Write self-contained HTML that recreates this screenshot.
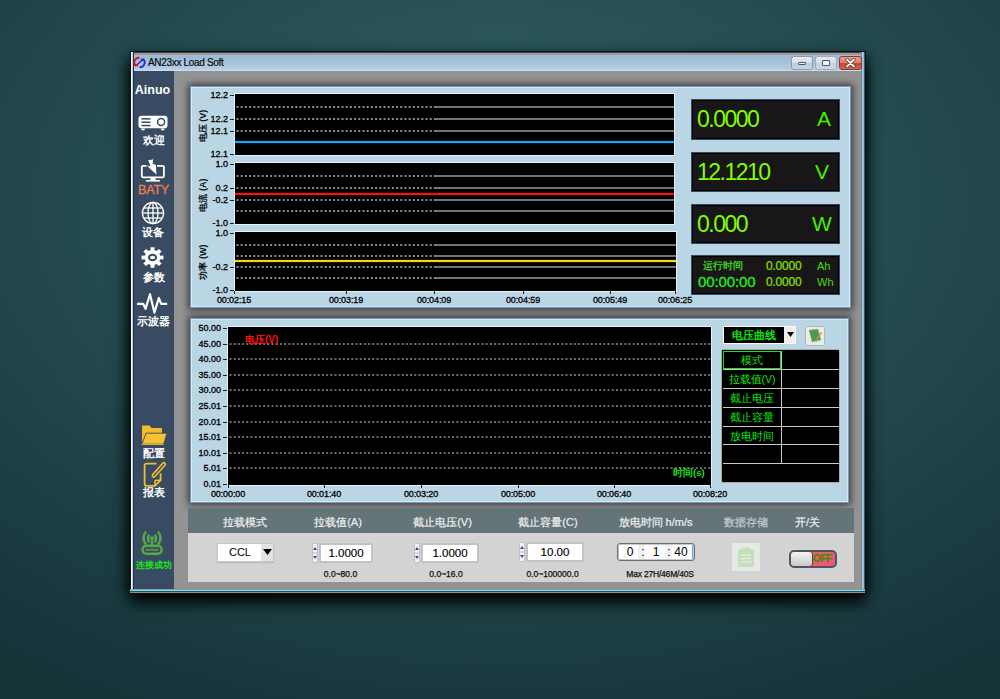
<!DOCTYPE html>
<html><head><meta charset="utf-8">
<style>
*{margin:0;padding:0;box-sizing:border-box}
html,body{width:1000px;height:699px;overflow:hidden}
body{position:relative;font-family:"Liberation Sans",sans-serif;
background:radial-gradient(ellipse 850px 580px at 500px 200px,#326267 0%,#153237 100%);}
.a{position:absolute}
#shadow{left:130px;top:56px;width:735px;height:537px;box-shadow:0 10px 14px 0 rgba(0,0,0,.85),-3px 0 14px 0 rgba(0,0,0,.55),3px 0 10px 0 rgba(0,0,0,.5)}
#frame{left:130px;top:51px;width:736px;height:543px;background:#061416}
#title{left:131px;top:52px;width:734px;height:19px;background:linear-gradient(#3a4446 0,#3a4446 1px,#a09896 1px,#a09896 2.5px,#a0bce0 3px,#9cb8d4 5px,#a8c4dc 11px,#b4cce4 17px,#c0dcf4 18px,#c0dcf4 19px)}
#lb{left:131px;top:52px;width:3px;height:541px;background:linear-gradient(90deg,#f4f8fc 0,#f4f8fc 1px,#c4d4e8 1px,#c4d4e8 2px,#1a2e48 2px)}
#rb{left:861px;top:52px;width:4px;height:541px;background:linear-gradient(90deg,#8a8080 0,#8a8080 1px,#c0c0d8 1px,#c0c0d8 2px,#70c8e8 2px,#70c8e8 3px,#2a6070 3px)}
#bb{left:130px;top:589px;width:735px;height:4px;background:linear-gradient(#a09090 0,#a09090 1px,#80e0f8 1px,#80e0f8 2px,#0a5a6a 2px,#0a5a6a 3px,#a08888 3px)}
#client{left:134px;top:71px;width:727px;height:518px;background:#939393}
#side{left:134px;top:71px;width:40px;height:518px;background:#384b62}
.panel{background:#bad5e3;border:1px solid #7898c0;box-shadow:inset 0 0 0 1px #d0eaf6,0 0 7px 2px rgba(0,0,0,.6)}
.plot{background:#000;border-top:1px solid #e8f4fa}
.lbl{font-size:9px;color:#000;text-align:right;width:40px;line-height:10px;letter-spacing:0px;-webkit-text-stroke:0.3px #000}
.tl{font-size:9px;color:#000;line-height:10px;width:60px;text-align:center;letter-spacing:-0.1px;-webkit-text-stroke:0.3px #000}
.grid{height:1px;background:repeating-linear-gradient(90deg,#9a9a9a 0 2px,transparent 2px 5px)}
.box{background:#181616;border:1px solid #2f4d68;box-shadow:inset 0 0 0 1px #000}
.big{font-size:22px;color:#7fff00;line-height:22px}
.side-t{left:133px;width:41px;text-align:center;font-size:10.5px;font-weight:bold;color:#fff;line-height:12px}
.hdr{font-size:11px;color:#f0f0f0;line-height:12px;text-align:center}
</style></head><body>
<div id="shadow" class="a"></div>
<div id="frame" class="a"></div>
<div id="title" class="a"></div>
<div id="client" class="a"></div>
<div id="lb" class="a"></div>
<div id="rb" class="a"></div>
<div id="bb" class="a"></div>
<div id="side" class="a"></div>


<!-- title bar -->
<svg class="a" style="left:133px;top:56px" width="13" height="13" viewBox="0 0 13 13">
<path d="M6.5 1.8 A4.7 4.7 0 0 0 3.2 10.2" fill="none" stroke="#e01010" stroke-width="1.8"/>
<path d="M6.5 11.2 A4.7 4.7 0 0 0 9.8 2.8" fill="none" stroke="#1530d0" stroke-width="1.8"/>
<path d="M2 8.5 L4.8 11 L5.2 7.6Z" fill="#e01010"/>
<path d="M11 4.5 L8.2 2 L7.8 5.4Z" fill="#1530d0"/>
<path d="M4.5 8.5 L8.5 4.5" stroke="#1530d0" stroke-width="1.4"/>
</svg>
<div class="a" id="ttext" style="left:148px;top:57px;font-size:10px;line-height:12px;color:#0a0a0a;letter-spacing:-0.32px;-webkit-text-stroke:0.2px #0a0a0a">AN23xx Load Soft</div>
<!-- window buttons -->
<div class="a" style="left:791px;top:56px;width:22px;height:14px;border:1px solid #8b9cae;border-radius:3px;background:linear-gradient(#e6eef7 0%,#d4e0ec 45%,#bccbdc 55%,#c8d6e6 100%)"></div>
<div class="a" style="left:798px;top:62px;width:8px;height:3px;background:#f4f4f4;border:1px solid #4c5868;border-radius:1px"></div>
<div class="a" style="left:815px;top:56px;width:22px;height:14px;border:1px solid #9eadbe;border-radius:3px;background:linear-gradient(#e2eaf4 0%,#d4e0ec 45%,#c2d0e0 55%,#ccd9e8 100%)"></div>
<div class="a" style="left:822px;top:60px;width:8px;height:6px;background:#f4f4f4;border:1px solid #4c5868;border-radius:1px"></div>
<div class="a" style="left:839px;top:56px;width:23px;height:14px;border:1px solid #8a3b30;border-radius:3px;background:linear-gradient(#eaa294 0%,#e07f6c 45%,#c8462f 55%,#d26650 100%)"></div>
<svg class="a" style="left:845px;top:58px" width="11" height="10" viewBox="0 0 11 10"><path d="M2 1.5 L9 8.5 M9 1.5 L2 8.5" stroke="#4a2a28" stroke-width="3.2" stroke-linecap="round"/><path d="M2 1.5 L9 8.5 M9 1.5 L2 8.5" stroke="#fff" stroke-width="1.8" stroke-linecap="round"/></svg>

<!-- sidebar -->
<div class="a" style="left:132px;top:83px;width:41px;text-align:center;font-size:12.5px;font-weight:bold;color:#fff;line-height:14px">Ainuo</div>
<svg class="a" style="left:137px;top:114px" width="32" height="20" viewBox="0 0 32 20">
<rect x="1.5" y="1.8" width="29" height="12.4" rx="3" fill="#fff"/>
<rect x="4.5" y="4.1" width="9" height="1.5" fill="#384b62"/><rect x="4.5" y="7.5" width="9" height="1.5" fill="#384b62"/><rect x="4.5" y="10.8" width="9" height="1.5" fill="#384b62"/>
<circle cx="24.1" cy="7.9" r="3.5" fill="none" stroke="#384b62" stroke-width="1.5"/>
<path d="M4 14.5 h4 a2 2 0 0 1 -4 0z M23.7 14.5 h4 a2 2 0 0 1 -4 0z" fill="#fff"/>
</svg>
<div class="a side-t" style="top:134px">欢迎</div>
<svg class="a" style="left:140px;top:158px" width="26" height="25" viewBox="0 0 26 25">
<rect x="1.8" y="7.9" width="22.1" height="11.4" rx="1.2" fill="none" stroke="#fff" stroke-width="1.8"/>
<rect x="10.5" y="20" width="5" height="2.5" fill="#fff"/><rect x="6" y="22" width="13.8" height="1.6" fill="#fff"/>
<path d="M7.5 2 L14 0.6 L13 5.5 L16.5 6.5 L17 17.5 L6.5 8 L10 7.5Z" fill="#fff" stroke="#384b62" stroke-width="1" stroke-linejoin="round"/>
</svg>
<div class="a" style="left:133px;top:183px;width:41px;text-align:center;font-size:12.5px;letter-spacing:-0.2px;-webkit-text-stroke:0.3px #f47c52;color:#f47c52;line-height:14px">BATY</div>
<svg class="a" style="left:141px;top:201px" width="24" height="24" viewBox="0 0 24 24">
<g fill="none" stroke="#fff" stroke-width="1.3">
<circle cx="12" cy="12" r="10.6"/><ellipse cx="12" cy="12" rx="5" ry="10.6"/><line x1="12" y1="1.4" x2="12" y2="22.6"/>
<line x1="1.4" y1="12" x2="22.6" y2="12"/><line x1="3" y1="7" x2="21" y2="7"/><line x1="3" y1="17" x2="21" y2="17"/>
</g></svg>
<div class="a side-t" style="top:226px;left:132px">设备</div>
<svg class="a" style="left:141px;top:247px" width="23" height="22" viewBox="0 0 23 22">
<path fill="#fff" d="M8.45 3.62 L9.57 3.27 L9.47 0.29 L13.53 0.29 L13.43 3.27 L14.55 3.62 L15.61 4.12 L17.80 1.94 L20.67 4.62 L18.34 6.66 L18.87 7.65 L19.24 8.70 L22.44 8.61 L22.44 12.39 L19.24 12.30 L18.87 13.35 L18.34 14.34 L20.67 16.38 L17.80 19.06 L15.61 16.88 L14.55 17.38 L13.43 17.73 L13.53 20.71 L9.47 20.71 L9.57 17.73 L8.45 17.38 L7.39 16.88 L5.20 19.06 L2.33 16.38 L4.66 14.34 L4.13 13.35 L3.76 12.30 L0.56 12.39 L0.56 8.61 L3.76 8.70 L4.13 7.65 L4.66 6.66 L2.33 4.62 L5.20 1.94 L7.39 4.12Z"/><ellipse cx="11.5" cy="10.5" rx="3.6" ry="2.8" fill="#fff" stroke="#384b62" stroke-width="2"/>
</svg>
<div class="a side-t" style="top:271px">参数</div>
<svg class="a" style="left:136px;top:292px" width="33" height="23" viewBox="0 0 33 23">
<path d="M1 11.8 L7.2 11.8 L9.6 16.8 L14 2.2 L18.4 20.6 L22.8 6 L25.2 11.8 L31.2 11.8" fill="none" stroke="#fff" stroke-width="2.2" stroke-linejoin="round" stroke-linecap="butt"/>
</svg>
<div class="a side-t" style="top:315px;font-size:11px">示波器</div>
<svg class="a" style="left:141px;top:424px" width="27" height="22" viewBox="0 0 27 22">
<path d="M1 1.5 L8.5 1.5 L10.5 4 L21 4 L21 12 L1 20 Z" fill="#f2bd2c"/>
<path d="M5 9.2 L26 9.2 L22.6 20.2 L1 20.2 Z" fill="#f7c233" stroke="#384b62" stroke-width="0.9" stroke-linejoin="round"/>
<path d="M1 19.5 L1 20.4 L22.6 20.4" fill="none" stroke="#f7c233" stroke-width="0.9"/>
</svg>
<div class="a side-t" style="top:447px">配置</div>
<svg class="a" style="left:143px;top:460px" width="25" height="28" viewBox="0 0 25 28">
<path d="M13.5 3.6 L3.6 3.6 Q1.6 3.6 1.6 5.6 L1.6 23.8 Q1.6 25.8 3.6 25.8 L12 25.8 L17.6 20.2 L17.6 13.5" fill="none" stroke="#f2bd2c" stroke-width="1.8"/>
<path d="M12 25.8 L12 21.6 Q12 20.2 13.4 20.2 L17.6 20.2" fill="none" stroke="#f2bd2c" stroke-width="1.6"/>
<line x1="10.8" y1="15.6" x2="20.8" y2="4.2" stroke="#f2bd2c" stroke-width="4.6" stroke-linecap="round"/>
<line x1="10.8" y1="15.6" x2="20.8" y2="4.2" stroke="#384b62" stroke-width="1.3" stroke-linecap="round"/>
</svg>
<div class="a side-t" style="top:486px">报表</div>
<svg class="a" style="left:140px;top:530px" width="25" height="26" viewBox="0 0 25 26">
<g fill="none" stroke="#58a84a" stroke-width="2.4">
<path d="M6 1.5 Q1 8 6 14.5"/><path d="M18 1.5 Q23 8 18 14.5"/>
<path d="M9.2 4.8 Q6.6 8.5 9.2 12.2"/><path d="M14.8 4.8 Q17.4 8.5 14.8 12.2"/>
<line x1="12" y1="8" x2="12" y2="16"/>
<rect x="2.6" y="15.8" width="19" height="8" rx="3.6"/>
</g><rect x="5.5" y="18.6" width="13" height="2.4" fill="#4a8c40"/><circle cx="12" cy="8.2" r="2" fill="#58a84a"/></svg>
<div class="a side-t" style="top:559px;left:134px;width:39px;font-size:9px;color:#1ee01e">连接成功</div>

<!-- upper panel -->
<div class="a panel" style="left:190px;top:86px;width:661px;height:222px"></div>
<div class="a plot" style="left:234px;top:94px;width:440px;height:61px"></div>
<div class="a plot" style="left:234px;top:163px;width:440px;height:61px"></div>
<div class="a plot" style="left:234px;top:232px;width:442px;height:59px"></div>

<!-- readouts -->
<div class="a box" style="left:691px;top:99px;width:149px;height:41px"></div>
<div class="a box" style="left:691px;top:152px;width:149px;height:40px"></div>
<div class="a box" style="left:691px;top:204px;width:149px;height:40px"></div>
<div class="a box" style="left:691px;top:255px;width:149px;height:40px"></div>
<div class="a" style="left:234px;top:93px;width:441px;height:63px;background:#e4f3f9"></div>
<div class="a" style="left:235px;top:94px;width:439px;height:61px;background:#000"></div>
<svg class="a" style="left:236px;top:106px" width="199" height="2"><line x1="0.5" y1="1.0" x2="199" y2="1.0" stroke="#8c8c8c" stroke-width="2" stroke-dasharray="2 2.2"/></svg>
<div class="a" style="left:435px;top:106px;width:239px;height:2px;background:#747474"></div>
<svg class="a" style="left:236px;top:118px" width="199" height="2"><line x1="0.5" y1="1.0" x2="199" y2="1.0" stroke="#8c8c8c" stroke-width="2" stroke-dasharray="2 2.2"/></svg>
<div class="a" style="left:435px;top:118px;width:239px;height:2px;background:#747474"></div>
<svg class="a" style="left:236px;top:130px" width="199" height="2"><line x1="0.5" y1="1.0" x2="199" y2="1.0" stroke="#8c8c8c" stroke-width="2" stroke-dasharray="2 2.2"/></svg>
<div class="a" style="left:435px;top:130px;width:239px;height:2px;background:#747474"></div>
<div class="a" style="left:235px;top:141px;width:439px;height:2px;background:#19a4f4;box-shadow:0 0 1px #19a4f4"></div>
<div class="a lbl" style="left:184px;top:90px;width:44px;font-size:9px">12.2</div>
<div class="a" style="left:230px;top:95px;width:4px;height:1px;background:#202020"></div>
<div class="a lbl" style="left:184px;top:114px;width:44px;font-size:9px">12.2</div>
<div class="a" style="left:230px;top:119px;width:4px;height:1px;background:#202020"></div>
<div class="a lbl" style="left:184px;top:126px;width:44px;font-size:9px">12.1</div>
<div class="a" style="left:230px;top:131px;width:4px;height:1px;background:#202020"></div>
<div class="a lbl" style="left:184px;top:149px;width:44px;font-size:9px">12.1</div>
<div class="a" style="left:230px;top:154px;width:4px;height:1px;background:#202020"></div>
<div class="a" style="left:163px;top:120px;width:80px;height:12px;line-height:12px;font-size:9px;text-align:center;color:#111;font-weight:bold;transform:rotate(-90deg)">电压 (V)</div>
<div class="a" style="left:234px;top:162px;width:441px;height:63px;background:#e4f3f9"></div>
<div class="a" style="left:235px;top:163px;width:439px;height:61px;background:#000"></div>
<svg class="a" style="left:236px;top:175px" width="199" height="2"><line x1="0.5" y1="1.0" x2="199" y2="1.0" stroke="#8c8c8c" stroke-width="2" stroke-dasharray="2 2.2"/></svg>
<div class="a" style="left:435px;top:175px;width:239px;height:2px;background:#747474"></div>
<svg class="a" style="left:236px;top:187px" width="199" height="2"><line x1="0.5" y1="1.0" x2="199" y2="1.0" stroke="#8c8c8c" stroke-width="2" stroke-dasharray="2 2.2"/></svg>
<div class="a" style="left:435px;top:187px;width:239px;height:2px;background:#747474"></div>
<svg class="a" style="left:236px;top:199px" width="199" height="2"><line x1="0.5" y1="1.0" x2="199" y2="1.0" stroke="#8c8c8c" stroke-width="2" stroke-dasharray="2 2.2"/></svg>
<div class="a" style="left:435px;top:199px;width:239px;height:2px;background:#747474"></div>
<svg class="a" style="left:236px;top:210px" width="199" height="2"><line x1="0.5" y1="1.0" x2="199" y2="1.0" stroke="#8c8c8c" stroke-width="2" stroke-dasharray="2 2.2"/></svg>
<div class="a" style="left:435px;top:210px;width:239px;height:2px;background:#747474"></div>
<div class="a" style="left:235px;top:193px;width:439px;height:2px;background:#ff1010;box-shadow:0 0 1px #ff1010"></div>
<div class="a lbl" style="left:184px;top:159px;width:44px;font-size:9px">1.0</div>
<div class="a" style="left:230px;top:164px;width:4px;height:1px;background:#202020"></div>
<div class="a lbl" style="left:184px;top:183px;width:44px;font-size:9px">0.2</div>
<div class="a" style="left:230px;top:188px;width:4px;height:1px;background:#202020"></div>
<div class="a lbl" style="left:184px;top:195px;width:44px;font-size:9px">-0.2</div>
<div class="a" style="left:230px;top:200px;width:4px;height:1px;background:#202020"></div>
<div class="a lbl" style="left:184px;top:218px;width:44px;font-size:9px">-1.0</div>
<div class="a" style="left:230px;top:223px;width:4px;height:1px;background:#202020"></div>
<div class="a" style="left:163px;top:189px;width:80px;height:12px;line-height:12px;font-size:9px;text-align:center;color:#111;font-weight:bold;transform:rotate(-90deg)">电流 (A)</div>
<div class="a" style="left:234px;top:231px;width:443px;height:61px;background:#e4f3f9"></div>
<div class="a" style="left:235px;top:232px;width:441px;height:59px;background:#000"></div>
<svg class="a" style="left:236px;top:244px" width="199" height="2"><line x1="0.5" y1="1.0" x2="199" y2="1.0" stroke="#8c8c8c" stroke-width="2" stroke-dasharray="2 2.2"/></svg>
<div class="a" style="left:435px;top:244px;width:241px;height:2px;background:#747474"></div>
<svg class="a" style="left:236px;top:255px" width="199" height="2"><line x1="0.5" y1="1.0" x2="199" y2="1.0" stroke="#8c8c8c" stroke-width="2" stroke-dasharray="2 2.2"/></svg>
<div class="a" style="left:435px;top:255px;width:241px;height:2px;background:#747474"></div>
<svg class="a" style="left:236px;top:266px" width="199" height="2"><line x1="0.5" y1="1.0" x2="199" y2="1.0" stroke="#8c8c8c" stroke-width="2" stroke-dasharray="2 2.2"/></svg>
<div class="a" style="left:435px;top:266px;width:241px;height:2px;background:#747474"></div>
<svg class="a" style="left:236px;top:277px" width="199" height="2"><line x1="0.5" y1="1.0" x2="199" y2="1.0" stroke="#8c8c8c" stroke-width="2" stroke-dasharray="2 2.2"/></svg>
<div class="a" style="left:435px;top:277px;width:241px;height:2px;background:#747474"></div>
<div class="a" style="left:235px;top:260px;width:441px;height:2px;background:#ffd400;box-shadow:0 0 1px #ffd400"></div>
<div class="a lbl" style="left:184px;top:228px;width:44px;font-size:9px">1.0</div>
<div class="a" style="left:230px;top:233px;width:4px;height:1px;background:#202020"></div>
<div class="a lbl" style="left:184px;top:262px;width:44px;font-size:9px">-0.2</div>
<div class="a" style="left:230px;top:267px;width:4px;height:1px;background:#202020"></div>
<div class="a lbl" style="left:184px;top:285px;width:44px;font-size:9px">-1.0</div>
<div class="a" style="left:230px;top:290px;width:4px;height:1px;background:#202020"></div>
<div class="a" style="left:163px;top:256px;width:80px;height:12px;line-height:12px;font-size:9px;text-align:center;color:#111;font-weight:bold;transform:rotate(-90deg)">功率 (W)</div>
<div class="a" style="left:234px;top:291px;width:1px;height:3px;background:#202020"></div>
<div class="a tl" style="left:204.0px;top:295px;width:60px;font-size:9px">00:02:15</div>
<div class="a" style="left:346px;top:291px;width:1px;height:3px;background:#202020"></div>
<div class="a tl" style="left:316.0px;top:295px;width:60px;font-size:9px">00:03:19</div>
<div class="a" style="left:434px;top:291px;width:1px;height:3px;background:#202020"></div>
<div class="a tl" style="left:404.0px;top:295px;width:60px;font-size:9px">00:04:09</div>
<div class="a" style="left:523px;top:291px;width:1px;height:3px;background:#202020"></div>
<div class="a tl" style="left:493.0px;top:295px;width:60px;font-size:9px">00:04:59</div>
<div class="a" style="left:610px;top:291px;width:1px;height:3px;background:#202020"></div>
<div class="a tl" style="left:580.0px;top:295px;width:60px;font-size:9px">00:05:49</div>
<div class="a" style="left:675px;top:291px;width:1px;height:3px;background:#202020"></div>
<div class="a tl" style="left:645.0px;top:295px;width:60px;font-size:9px">00:06:25</div>
<div class="a" style="left:697px;top:108px;white-space:nowrap;font-size:23px;line-height:23px;color:#80ff00;letter-spacing:-1.5px">0.0000</div>
<div class="a" style="left:817px;top:107px;white-space:nowrap;font-size:21px;line-height:23px;color:#44f000">A</div>
<div class="a" style="left:697px;top:161px;white-space:nowrap;font-size:23px;line-height:23px;color:#80ff00;letter-spacing:-1.5px">12.1210</div>
<div class="a" style="left:815px;top:160px;white-space:nowrap;font-size:21px;line-height:23px;color:#44f000">V</div>
<div class="a" style="left:697px;top:213px;white-space:nowrap;font-size:23px;line-height:23px;color:#80ff00;letter-spacing:-1.5px">0.000</div>
<div class="a" style="left:812px;top:212px;white-space:nowrap;font-size:21px;line-height:23px;color:#44f000">W</div>
<div class="a" style="left:703px;top:260px;white-space:nowrap;font-size:10px;line-height:12px;color:#44dd22;-webkit-text-stroke:0.3px #44dd22">运行时间</div>
<div class="a" style="left:698px;top:274px;white-space:nowrap;font-size:15px;line-height:16px;color:#22ee22;letter-spacing:-0.1px;-webkit-text-stroke:0.3px #22ee22">00:00:00</div>
<div class="a" style="left:766px;top:260px;white-space:nowrap;font-size:12px;line-height:12px;color:#88e000;letter-spacing:-0.2px;-webkit-text-stroke:0.2px #88e000">0.0000</div>
<div class="a" style="left:766px;top:276px;white-space:nowrap;font-size:12px;line-height:12px;color:#88e000;letter-spacing:-0.2px;-webkit-text-stroke:0.2px #88e000">0.0000</div>
<div class="a" style="left:817px;top:260px;white-space:nowrap;font-size:11px;line-height:12px;color:#44dd00">Ah</div>
<div class="a" style="left:817px;top:276px;white-space:nowrap;font-size:11px;line-height:12px;color:#44dd00">Wh</div>

<!-- lower panel -->
<div class="a panel" style="left:190px;top:318px;width:659px;height:185px"></div>
<div class="a plot" style="left:227px;top:326px;width:484px;height:159px"></div>

<div class="a" style="left:227px;top:326px;width:485px;height:160px;background:#e4f3f9"></div>
<div class="a" style="left:228px;top:327px;width:483px;height:158px;background:#000"></div>
<div class="a lbl" style="left:177px;top:323px;width:44px;font-size:9px">50.00</div>
<div class="a" style="left:223px;top:328px;width:4px;height:1px;background:#202020"></div>
<svg class="a" style="left:229px;top:343px" width="482" height="2"><line x1="0.5" y1="1.0" x2="482" y2="1.0" stroke="#6c6c6c" stroke-width="2" stroke-dasharray="2 2.2"/></svg>
<div class="a lbl" style="left:177px;top:339px;width:44px;font-size:9px">45.00</div>
<div class="a" style="left:223px;top:344px;width:4px;height:1px;background:#202020"></div>
<svg class="a" style="left:229px;top:358px" width="482" height="2"><line x1="0.5" y1="1.0" x2="482" y2="1.0" stroke="#6c6c6c" stroke-width="2" stroke-dasharray="2 2.2"/></svg>
<div class="a lbl" style="left:177px;top:354px;width:44px;font-size:9px">40.00</div>
<div class="a" style="left:223px;top:359px;width:4px;height:1px;background:#202020"></div>
<svg class="a" style="left:229px;top:374px" width="482" height="2"><line x1="0.5" y1="1.0" x2="482" y2="1.0" stroke="#6c6c6c" stroke-width="2" stroke-dasharray="2 2.2"/></svg>
<div class="a lbl" style="left:177px;top:370px;width:44px;font-size:9px">35.00</div>
<div class="a" style="left:223px;top:375px;width:4px;height:1px;background:#202020"></div>
<svg class="a" style="left:229px;top:389px" width="482" height="2"><line x1="0.5" y1="1.0" x2="482" y2="1.0" stroke="#6c6c6c" stroke-width="2" stroke-dasharray="2 2.2"/></svg>
<div class="a lbl" style="left:177px;top:385px;width:44px;font-size:9px">30.00</div>
<div class="a" style="left:223px;top:390px;width:4px;height:1px;background:#202020"></div>
<svg class="a" style="left:229px;top:405px" width="482" height="2"><line x1="0.5" y1="1.0" x2="482" y2="1.0" stroke="#6c6c6c" stroke-width="2" stroke-dasharray="2 2.2"/></svg>
<div class="a lbl" style="left:177px;top:401px;width:44px;font-size:9px">25.01</div>
<div class="a" style="left:223px;top:406px;width:4px;height:1px;background:#202020"></div>
<svg class="a" style="left:229px;top:421px" width="482" height="2"><line x1="0.5" y1="1.0" x2="482" y2="1.0" stroke="#6c6c6c" stroke-width="2" stroke-dasharray="2 2.2"/></svg>
<div class="a lbl" style="left:177px;top:417px;width:44px;font-size:9px">20.01</div>
<div class="a" style="left:223px;top:422px;width:4px;height:1px;background:#202020"></div>
<svg class="a" style="left:229px;top:436px" width="482" height="2"><line x1="0.5" y1="1.0" x2="482" y2="1.0" stroke="#6c6c6c" stroke-width="2" stroke-dasharray="2 2.2"/></svg>
<div class="a lbl" style="left:177px;top:432px;width:44px;font-size:9px">15.01</div>
<div class="a" style="left:223px;top:437px;width:4px;height:1px;background:#202020"></div>
<svg class="a" style="left:229px;top:452px" width="482" height="2"><line x1="0.5" y1="1.0" x2="482" y2="1.0" stroke="#6c6c6c" stroke-width="2" stroke-dasharray="2 2.2"/></svg>
<div class="a lbl" style="left:177px;top:448px;width:44px;font-size:9px">10.01</div>
<div class="a" style="left:223px;top:453px;width:4px;height:1px;background:#202020"></div>
<svg class="a" style="left:229px;top:467px" width="482" height="2"><line x1="0.5" y1="1.0" x2="482" y2="1.0" stroke="#6c6c6c" stroke-width="2" stroke-dasharray="2 2.2"/></svg>
<div class="a lbl" style="left:177px;top:463px;width:44px;font-size:9px">5.01</div>
<div class="a" style="left:223px;top:468px;width:4px;height:1px;background:#202020"></div>
<div class="a lbl" style="left:177px;top:479px;width:44px;font-size:9px">0.01</div>
<div class="a" style="left:223px;top:484px;width:4px;height:1px;background:#202020"></div>
<div class="a" style="left:228px;top:485px;width:1px;height:3px;background:#202020"></div>
<div class="a tl" style="left:198.0px;top:489px;width:60px;font-size:9px">00:00:00</div>
<div class="a" style="left:324px;top:485px;width:1px;height:3px;background:#202020"></div>
<div class="a tl" style="left:294.0px;top:489px;width:60px;font-size:9px">00:01:40</div>
<div class="a" style="left:421px;top:485px;width:1px;height:3px;background:#202020"></div>
<div class="a tl" style="left:391.0px;top:489px;width:60px;font-size:9px">00:03:20</div>
<div class="a" style="left:518px;top:485px;width:1px;height:3px;background:#202020"></div>
<div class="a tl" style="left:488.0px;top:489px;width:60px;font-size:9px">00:05:00</div>
<div class="a" style="left:614px;top:485px;width:1px;height:3px;background:#202020"></div>
<div class="a tl" style="left:584.0px;top:489px;width:60px;font-size:9px">00:06:40</div>
<div class="a" style="left:710px;top:485px;width:1px;height:3px;background:#202020"></div>
<div class="a tl" style="left:680.0px;top:489px;width:60px;font-size:9px">00:08:20</div>
<div class="a" style="left:723px;top:326px;width:73px;height:18px;background:#eeeeee;border:1px solid #fafafa;box-shadow:0 0 0 1px #c8d4da"></div>
<div class="a" style="left:724px;top:327px;width:60px;height:16px;background:#000"></div>
<div class="a" style="left:724px;top:328px;white-space:nowrap;width:60px;text-align:center;font-size:10.5px;line-height:14px;color:#14e014;font-weight:bold">电压曲线</div>
<svg class="a" style="left:787px;top:332px" width="7" height="5"><path d="M0 0 H7 L3.5 5Z" fill="#000"/></svg>
<div class="a" style="left:805px;top:326px;width:20px;height:20px;background:#e8ece8;border:1px solid #b0b8b0;border-radius:2px"></div>
<svg class="a" style="left:806px;top:327px" width="18" height="18" viewBox="0 0 18 18"><path d="M3 3 L12 2 L15 13 L6 15Z" fill="#4f9a50"/><path d="M6 15 L15 13 L15 14.5 L6 16.5Z" fill="#d8d8c8"/><path d="M10 12 L15 5 L16 6 L11 13Z" fill="#c89040"/></svg>
<div class="a" style="left:721px;top:349px;width:119px;height:134px;background:#000;border:1.5px solid #a8a8a8;border-radius:2px"></div>
<div class="a" style="left:723px;top:369px;width:116px;height:1px;background:#c8c8c8"></div>
<div class="a" style="left:723px;top:388px;width:116px;height:1px;background:#c8c8c8"></div>
<div class="a" style="left:723px;top:407px;width:116px;height:1px;background:#c8c8c8"></div>
<div class="a" style="left:723px;top:426px;width:116px;height:1px;background:#c8c8c8"></div>
<div class="a" style="left:723px;top:444px;width:116px;height:1px;background:#c8c8c8"></div>
<div class="a" style="left:723px;top:463px;width:116px;height:1px;background:#c8c8c8"></div>
<div class="a" style="left:781px;top:351px;width:1px;height:112px;background:#c8c8c8"></div>
<div class="a" style="left:723px;top:351px;width:58px;height:18px;border:1px solid #22dd22"></div>
<div class="a" style="left:723px;top:354px;white-space:nowrap;width:58px;text-align:center;font-size:10.5px;line-height:13px;color:#14e014">模式</div>
<div class="a" style="left:723px;top:373px;white-space:nowrap;width:58px;text-align:center;font-size:10.5px;line-height:13px;color:#14e014">拉载值(V)</div>
<div class="a" style="left:723px;top:392px;white-space:nowrap;width:58px;text-align:center;font-size:10.5px;line-height:13px;color:#14e014">截止电压</div>
<div class="a" style="left:723px;top:411px;white-space:nowrap;width:58px;text-align:center;font-size:10.5px;line-height:13px;color:#14e014">截止容量</div>
<div class="a" style="left:723px;top:430px;white-space:nowrap;width:58px;text-align:center;font-size:10.5px;line-height:13px;color:#14e014">放电时间</div>
<div class="a" style="left:245px;top:334px;white-space:nowrap;font-size:10px;line-height:12px;color:#ff1010;font-weight:bold">电压(V)</div>
<div class="a" style="left:673px;top:467px;white-space:nowrap;font-size:9.5px;line-height:12px;color:#22dd22;font-weight:bold">时间(s)</div>

<!-- control panel -->
<div class="a" style="left:188px;top:508px;width:666px;height:25px;background:#647479"></div>
<div class="a" style="left:188px;top:533px;width:666px;height:49px;background:#d3d3d3"></div>

<div class="a" style="left:184.5px;top:516px;white-space:nowrap;font-size:11px;line-height:12px;color:#f0f0f0;text-align:center;width:120px;-webkit-text-stroke:0.2px #f0f0f0">拉载模式</div>
<div class="a" style="left:278px;top:516px;white-space:nowrap;font-size:11px;line-height:12px;color:#f0f0f0;text-align:center;width:120px;-webkit-text-stroke:0.2px #f0f0f0">拉载值(A)</div>
<div class="a" style="left:382.5px;top:516px;white-space:nowrap;font-size:11px;line-height:12px;color:#f0f0f0;text-align:center;width:120px;-webkit-text-stroke:0.2px #f0f0f0">截止电压(V)</div>
<div class="a" style="left:488px;top:516px;white-space:nowrap;font-size:11px;line-height:12px;color:#f0f0f0;text-align:center;width:120px;-webkit-text-stroke:0.2px #f0f0f0">截止容量(C)</div>
<div class="a" style="left:595.5px;top:516px;white-space:nowrap;font-size:11px;line-height:12px;color:#f0f0f0;text-align:center;width:120px;-webkit-text-stroke:0.2px #f0f0f0">放电时间 h/m/s</div>
<div class="a" style="left:747.5px;top:516px;white-space:nowrap;font-size:11px;line-height:12px;color:#f0f0f0;text-align:center;width:120px;-webkit-text-stroke:0.2px #f0f0f0">开/关</div>
<div class="a" style="left:686px;top:516px;white-space:nowrap;font-size:11px;line-height:12px;color:#f0f0f0;text-align:center;width:120px;-webkit-text-stroke:0.2px #f0f0f0;color:#9aa7ad">数据存储</div>
<div class="a" style="left:217px;top:543px;width:57px;height:19px;background:#fff;border:1px solid #c8c8c8;box-shadow:0 1px 1px rgba(0,0,0,.12)"></div>
<div class="a" style="left:261px;top:544px;width:12px;height:17px;background:#e2e2e2"></div>
<svg class="a" style="left:263px;top:549px" width="9" height="6"><path d="M0 0 H9 L4.5 6Z" fill="#000"/></svg>
<div class="a" style="left:218px;top:546px;white-space:nowrap;width:44px;text-align:center;font-size:11px;line-height:13px;color:#000">CCL</div>
<div class="a" style="left:312px;top:543px;width:6px;height:20px;background:#f2f2f2;border:1px solid #c0c0c0;border-radius:1px"></div>
<svg class="a" style="left:312px;top:543px" width="6" height="20"><path d="M1 7 h4 l-2 -3z M1 13 h4 l-2 3z" fill="#3848b0"/><line x1="0.5" y1="10" x2="5.5" y2="10" stroke="#bdbdbd"/></svg>
<div class="a" style="left:319px;top:543px;width:54px;height:20px;background:#fff;border:2px solid #c2c2c2;border-radius:2px"></div>
<div class="a" style="left:319px;top:546px;white-space:nowrap;width:54px;text-align:center;font-size:11.5px;line-height:14px;color:#000;-webkit-text-stroke:0.15px #000">1.0000</div>
<div class="a" style="left:300.5px;top:569px;white-space:nowrap;width:80px;text-align:center;font-size:8.5px;line-height:10px;color:#111;-webkit-text-stroke:0.25px #111">0.0~80.0</div>
<div class="a" style="left:414px;top:543px;width:6px;height:20px;background:#f2f2f2;border:1px solid #c0c0c0;border-radius:1px"></div>
<svg class="a" style="left:414px;top:543px" width="6" height="20"><path d="M1 7 h4 l-2 -3z M1 13 h4 l-2 3z" fill="#3848b0"/><line x1="0.5" y1="10" x2="5.5" y2="10" stroke="#bdbdbd"/></svg>
<div class="a" style="left:421px;top:543px;width:58px;height:20px;background:#fff;border:2px solid #c2c2c2;border-radius:2px"></div>
<div class="a" style="left:421px;top:546px;white-space:nowrap;width:58px;text-align:center;font-size:11.5px;line-height:14px;color:#000;-webkit-text-stroke:0.15px #000">1.0000</div>
<div class="a" style="left:406px;top:569px;white-space:nowrap;width:80px;text-align:center;font-size:8.5px;line-height:10px;color:#111;-webkit-text-stroke:0.25px #111">0.0~16.0</div>
<div class="a" style="left:519px;top:542px;width:6px;height:20px;background:#f2f2f2;border:1px solid #c0c0c0;border-radius:1px"></div>
<svg class="a" style="left:519px;top:542px" width="6" height="20"><path d="M1 7 h4 l-2 -3z M1 13 h4 l-2 3z" fill="#3848b0"/><line x1="0.5" y1="10" x2="5.5" y2="10" stroke="#bdbdbd"/></svg>
<div class="a" style="left:526px;top:542px;width:58px;height:20px;background:#fff;border:2px solid #c2c2c2;border-radius:2px"></div>
<div class="a" style="left:526px;top:545px;white-space:nowrap;width:58px;text-align:center;font-size:11.5px;line-height:14px;color:#000;-webkit-text-stroke:0.15px #000">10.00</div>
<div class="a" style="left:512.5px;top:569px;white-space:nowrap;width:80px;text-align:center;font-size:8.5px;line-height:10px;color:#111;-webkit-text-stroke:0.25px #111">0.0~100000.0</div>
<div class="a" style="left:617px;top:543px;width:78px;height:18px;background:#fff;border:1px solid #6e6e6e;border-radius:3px;box-shadow:inset 0 0 0 1px #c8c8c8"></div>
<div class="a" style="left:671px;top:545px;width:22px;height:14px;border:1px solid #62a8f0;border-top:none;border-bottom:none"></div>
<div class="a" style="left:638px;top:545px;width:7px;height:14px;background:#f0f0f0"></div>
<div class="a" style="left:665px;top:545px;width:7px;height:14px;background:#f0f0f0"></div>
<div class="a" style="left:620px;top:545px;white-space:nowrap;font-size:12px;line-height:14px;color:#000;text-align:center;width:20px">0</div>
<div class="a" style="left:633px;top:545px;white-space:nowrap;font-size:12px;line-height:14px;color:#000;text-align:center;width:20px">:</div>
<div class="a" style="left:646px;top:545px;white-space:nowrap;font-size:12px;line-height:14px;color:#000;text-align:center;width:20px">1</div>
<div class="a" style="left:659px;top:545px;white-space:nowrap;font-size:12px;line-height:14px;color:#000;text-align:center;width:20px">:</div>
<div class="a" style="left:671px;top:545px;white-space:nowrap;font-size:12px;line-height:14px;color:#000;text-align:center;width:20px">40</div>
<div class="a" style="left:620px;top:569px;white-space:nowrap;width:80px;text-align:center;font-size:8.5px;line-height:10px;color:#111;letter-spacing:-0.2px;-webkit-text-stroke:0.25px #111">Max 27H/46M/40S</div>
<div class="a" style="left:732px;top:543px;width:28px;height:28px;background:#e6e9e6"></div>
<svg class="a" style="left:736px;top:547px" width="20" height="20" viewBox="0 0 20 20"><rect x="2" y="2" width="16" height="18" rx="2" fill="#c6dfb8"/><rect x="6" y="0.5" width="8" height="3" rx="1" fill="#c6dfb8"/><g stroke="#e8f0e2" stroke-width="1.2"><line x1="5" y1="8" x2="15" y2="8"/><line x1="5" y1="11.5" x2="15" y2="11.5"/><line x1="5" y1="15" x2="15" y2="15"/></g></svg>
<div class="a" style="left:789px;top:550px;width:48px;height:18px;background:#f05a78;border:2px solid #555;border-radius:5px;box-shadow:0 0 0 1px #c8dce8"></div>
<div class="a" style="left:791px;top:552px;width:21px;height:14px;background:linear-gradient(#f4f4f4,#c8c8c8);border-radius:3px;box-shadow:1px 0 1px #444"></div>
<div class="a" style="left:813px;top:552px;white-space:nowrap;font-size:10px;line-height:14px;font-weight:bold;color:#4a8a0a;letter-spacing:-0.3px;-webkit-text-stroke:0.3px #4a8a0a">OFF</div>

</body></html>
